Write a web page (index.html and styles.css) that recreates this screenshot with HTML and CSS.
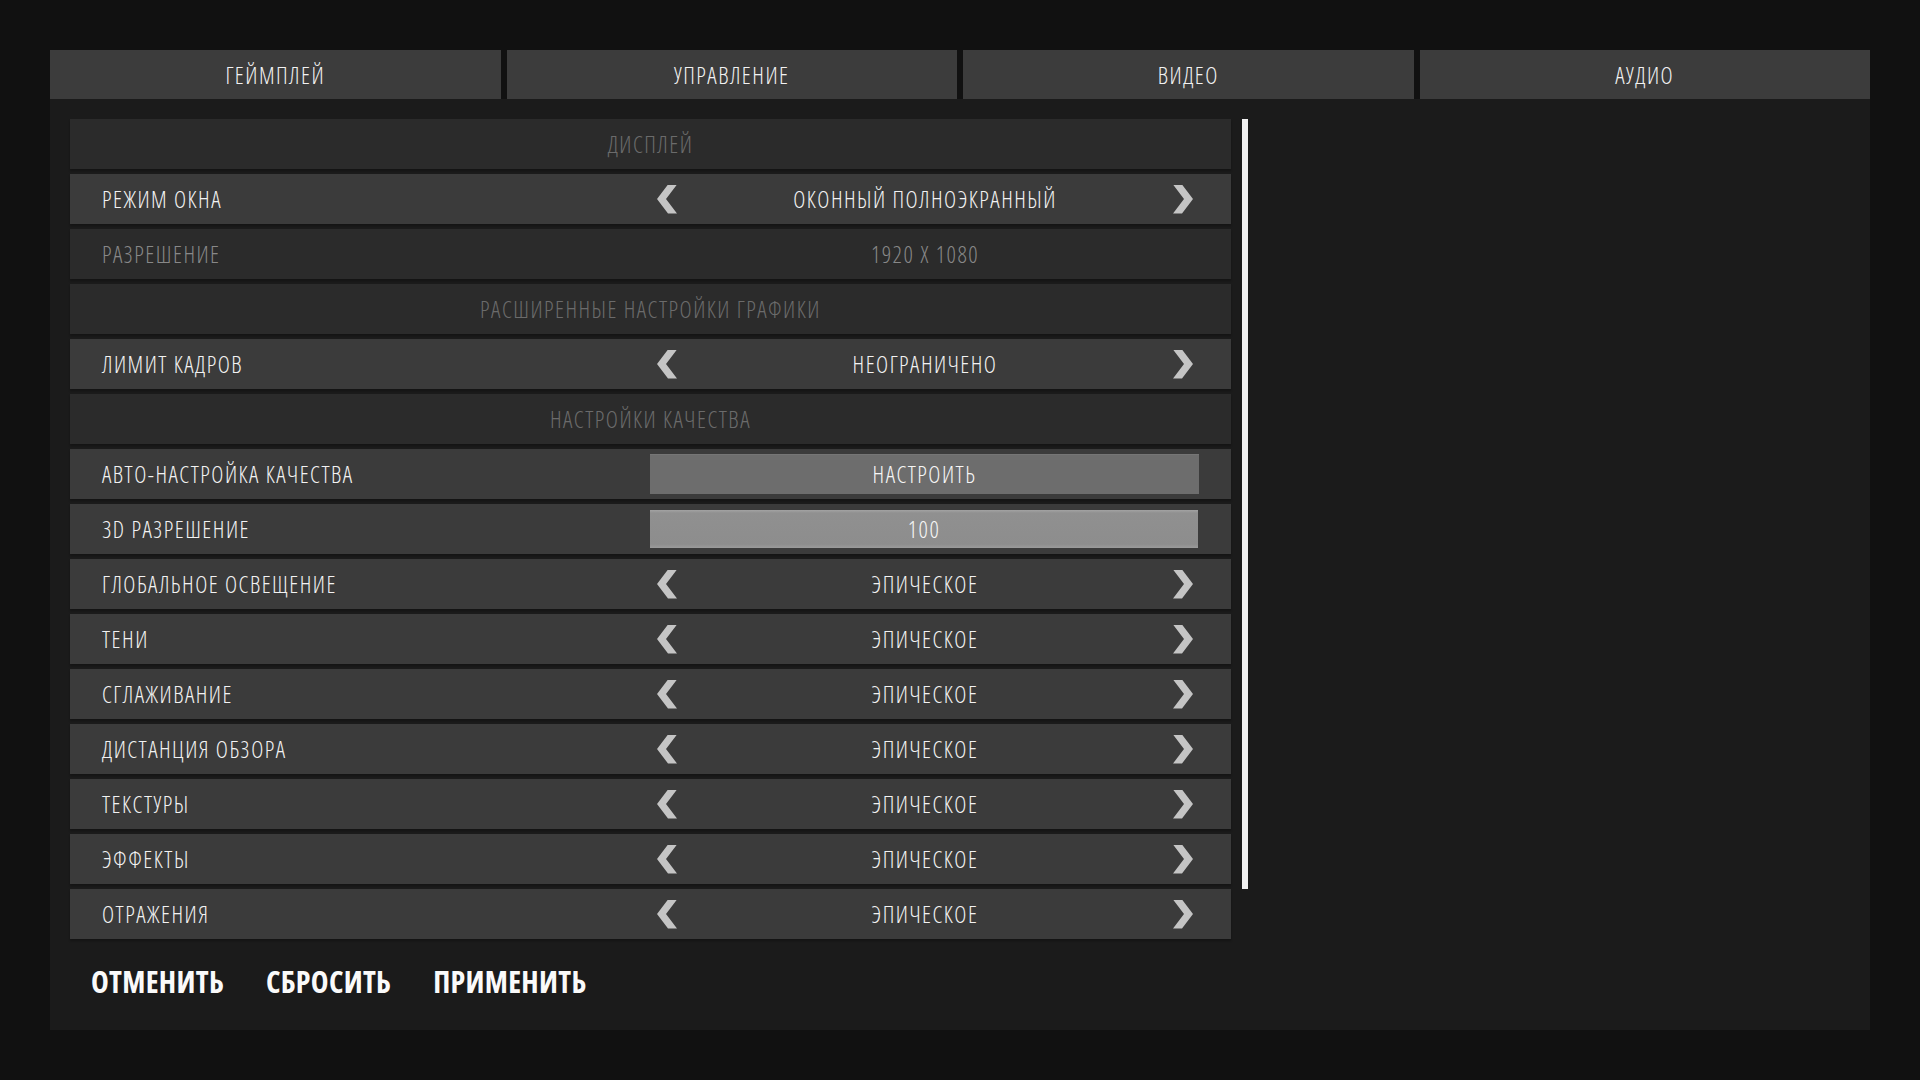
FILE: index.html
```html
<!DOCTYPE html>
<html lang="ru">
<head>
  <meta charset="UTF-8" />
  <title>Настройки</title>
  <link rel="stylesheet" href="styles.css">
</head>
<body>

  <div class="settings-panel">

    <div class="tabs">
      <div class="tab">ГЕЙМПЛЕЙ</div>
      <div class="tab">УПРАВЛЕНИЕ</div>
      <div class="tab">ВИДЕО</div>
      <div class="tab">АУДИО</div>
    </div>

    <div class="settings-body">
      <div class="rows">

        <div class="row row-header">ДИСПЛЕЙ</div>

        <div class="row">
          <div class="row-label">РЕЖИМ ОКНА</div>
          <div class="selector">
            <span class="arrow arrow-left"></span>
            <span class="selector-value">ОКОННЫЙ ПОЛНОЭКРАННЫЙ</span>
            <span class="arrow arrow-right"></span>
          </div>
        </div>

        <div class="row row-disabled">
          <div class="row-label">РАЗРЕШЕНИЕ</div>
          <div class="selector">
            <span class="selector-value">1920 X 1080</span>
          </div>
        </div>

        <div class="row row-header">РАСШИРЕННЫЕ НАСТРОЙКИ ГРАФИКИ</div>

        <div class="row">
          <div class="row-label">ЛИМИТ КАДРОВ</div>
          <div class="selector">
            <span class="arrow arrow-left"></span>
            <span class="selector-value">НЕОГРАНИЧЕНО</span>
            <span class="arrow arrow-right"></span>
          </div>
        </div>

        <div class="row row-header">НАСТРОЙКИ КАЧЕСТВА</div>

        <div class="row">
          <div class="row-label">АВТО-НАСТРОЙКА КАЧЕСТВА</div>
          <div class="action-btn">НАСТРОИТЬ</div>
        </div>

        <div class="row">
          <div class="row-label">3D РАЗРЕШЕНИЕ</div>
          <div class="slider">100</div>
        </div>

        <div class="row">
          <div class="row-label">ГЛОБАЛЬНОЕ ОСВЕЩЕНИЕ</div>
          <div class="selector">
            <span class="arrow arrow-left"></span>
            <span class="selector-value">ЭПИЧЕСКОЕ</span>
            <span class="arrow arrow-right"></span>
          </div>
        </div>

        <div class="row">
          <div class="row-label">ТЕНИ</div>
          <div class="selector">
            <span class="arrow arrow-left"></span>
            <span class="selector-value">ЭПИЧЕСКОЕ</span>
            <span class="arrow arrow-right"></span>
          </div>
        </div>

        <div class="row">
          <div class="row-label">СГЛАЖИВАНИЕ</div>
          <div class="selector">
            <span class="arrow arrow-left"></span>
            <span class="selector-value">ЭПИЧЕСКОЕ</span>
            <span class="arrow arrow-right"></span>
          </div>
        </div>

        <div class="row">
          <div class="row-label">ДИСТАНЦИЯ ОБЗОРА</div>
          <div class="selector">
            <span class="arrow arrow-left"></span>
            <span class="selector-value">ЭПИЧЕСКОЕ</span>
            <span class="arrow arrow-right"></span>
          </div>
        </div>

        <div class="row">
          <div class="row-label">ТЕКСТУРЫ</div>
          <div class="selector">
            <span class="arrow arrow-left"></span>
            <span class="selector-value">ЭПИЧЕСКОЕ</span>
            <span class="arrow arrow-right"></span>
          </div>
        </div>

        <div class="row">
          <div class="row-label">ЭФФЕКТЫ</div>
          <div class="selector">
            <span class="arrow arrow-left"></span>
            <span class="selector-value">ЭПИЧЕСКОЕ</span>
            <span class="arrow arrow-right"></span>
          </div>
        </div>

        <div class="row">
          <div class="row-label">ОТРАЖЕНИЯ</div>
          <div class="selector">
            <span class="arrow arrow-left"></span>
            <span class="selector-value">ЭПИЧЕСКОЕ</span>
            <span class="arrow arrow-right"></span>
          </div>
        </div>

      </div>

      <div class="scrollbar"></div>
    </div>

    <div class="footer">
      <div class="footer-btn">ОТМЕНИТЬ</div>
      <div class="footer-btn">СБРОСИТЬ</div>
      <div class="footer-btn">ПРИМЕНИТЬ</div>
    </div>

  </div>

</body>
</html>
```

FILE: styles.css
```css
html, body {
  margin: 0;
  padding: 0;
  width: 100%;
  height: 100%;
  background: #111;
  overflow: hidden;
  font-family: "Open Sans", "DejaVu Sans Condensed", sans-serif;
  font-stretch: 75%;
  font-weight: 300;
  letter-spacing: 1.5px;
  color: #f2f2f2;
}

body {
  padding: 50px;
  box-sizing: border-box;
}

.settings-panel {
  width: 1820px;
  height: 980px;
  background: #1b1b1b;
  display: flex;
  flex-direction: column;
}

.tabs {
  display: grid;
  grid-template-columns: repeat(4, 1fr);
  gap: 6px;
  height: 49px;
  background: #111;
}
.tab {
  background: #3c3c3c;
  display: flex;
  align-items: center;
  justify-content: center;
  font-size: 23px;
  color: #f2f2f2;
}

.settings-body {
  display: flex;
  align-items: flex-start;
  gap: 11px;
  padding: 20px 0 0 20px;
}

.rows {
  width: 1161px;
  display: flex;
  flex-direction: column;
  gap: 5px;
}

.row {
  height: 50px;
  background: #3b3b3b;
  display: flex;
  align-items: center;
  padding-right: 32px;
  font-size: 23px;
  box-shadow: 0 2px 2px rgba(0,0,0,0.25);
}

.row-label {
  width: 548px;
  padding-left: 32px;
  flex-shrink: 0;
}

.row-header {
  background: #2b2b2b;
  justify-content: center;
  padding-right: 0;
  color: #6b6b6b;
}

.row-disabled {
  background: #2b2b2b;
  color: #888;
}

.selector {
  width: 549px;
  height: 100%;
  display: flex;
  align-items: center;
  padding: 0 6px 0 7px;
  box-sizing: border-box;
}
.selector-value {
  flex: 1;
  text-align: center;
}

.arrow {
  width: 20px;
  height: 29px;
  background: #c4c4c4;
  flex-shrink: 0;
}
.arrow-left {
  clip-path: polygon(11px 0, 20px 0, 9px 14.5px, 20px 29px, 11px 29px, 0 14.5px);
}
.arrow-right {
  clip-path: polygon(0 0, 9px 0, 20px 14.5px, 9px 29px, 0 29px, 11px 14.5px);
}

.action-btn {
  width: 549px;
  height: 40px;
  background: #6d6d6d;
  display: flex;
  align-items: center;
  justify-content: center;
  color: #f6f6f6;
  box-shadow: inset 0 1px 0 rgba(255,255,255,0.06);
}

.slider {
  width: 548px;
  height: 38px;
  background: linear-gradient(to bottom, #a3a3a3 0, #909090 3px, #8d8d8d 90%, #9b9b9b 100%);
  display: flex;
  align-items: center;
  justify-content: center;
  color: #f6f6f6;
}

.scrollbar {
  width: 6px;
  height: 770px;
  background: #f0f0f0;
}

.footer {
  display: flex;
  gap: 42px;
  padding-left: 41px;
  margin-top: 28px;
}
.footer-btn {
  font-size: 30px;
  line-height: 30px;
  font-weight: 700;
  letter-spacing: 0.3px;
  color: #fafafa;
  cursor: pointer;
}
```
